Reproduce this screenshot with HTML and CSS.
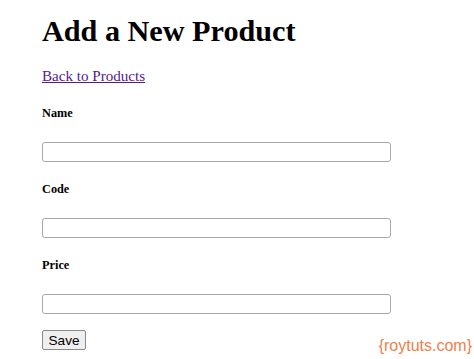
FILE: index.html
```html
<!DOCTYPE html>
<html>
<head>
<meta charset="utf-8">
<link rel="stylesheet" href="styles.css">
</head>
<body>
<div class="page">
  <h1 class="title">Add a New Product</h1>
  <a class="back" href="#">Back to Products</a>
  <form class="form">
    <label class="lbl lbl-first">Name</label>
    <input class="field" type="text">
    <label class="lbl">Code</label>
    <input class="field" type="text">
    <label class="lbl">Price</label>
    <input class="field" type="text">
    <button class="save" type="button">Save</button>
  </form>
</div>
<div class="watermark">{roytuts.com}</div>
</body>
</html>
```
FILE: styles.css
```css
html, body {
  margin: 0;
  padding: 0;
  background: #fff;
}
body {
  font-family: "Liberation Serif", "Times New Roman", serif;
  color: #000;
  width: 474px;
  height: 359px;
  overflow: hidden;
  position: relative;
}
.page {
  padding: 13px 0 0 42px;
  display: flex;
  flex-direction: column;
  align-items: flex-start;
}
.title {
  margin: 0;
  font-size: 30.2px;
  line-height: 37px;
  font-weight: bold;
}
.back {
  margin-top: 17px;
  font-size: 15.1px;
  line-height: 18px;
  color: #551a8b;
  text-decoration: underline;
}
.form {
  display: flex;
  flex-direction: column;
  align-items: flex-start;
}
.lbl {
  margin-top: 20px;
  font-size: 12.3px;
  line-height: 15px;
  font-weight: bold;
}
.lbl-first {
  margin-top: 21px;
}
.field {
  margin: 21px 0 0 0;
  width: 349px;
  height: 20px;
  box-sizing: border-box;
  border: 1px solid #a8a8a8;
  border-radius: 3px;
  padding: 1px 2px;
  background: #fff;
}
.save {
  margin-top: 16px;
  width: 44px;
  height: 20px;
  box-sizing: border-box;
  padding: 0;
  font-family: "Liberation Sans", Arial, sans-serif;
  font-size: 13.6px;
  color: #000;
  background: #efefef;
  border: 1px solid #8a8a8a;
  border-radius: 2px;
}
.watermark {
  position: absolute;
  right: 2px;
  top: 336px;
  font-family: "Liberation Sans", Arial, sans-serif;
  font-size: 16px;
  line-height: 20px;
  color: #f0804a;
}
```
